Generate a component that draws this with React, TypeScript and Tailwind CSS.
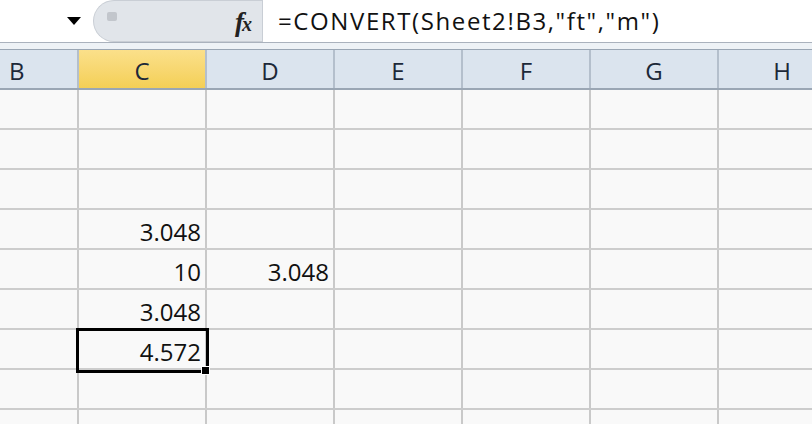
import React from 'react';

const cols = ['B', 'C', 'D', 'E', 'F', 'G', 'H'];
const widths = ['w-[79px]', 'w-[128px]', 'w-[128px]', 'w-[128px]', 'w-[128px]', 'w-[128px]', 'w-[128px]'];

// cell values by row index (0-based) and column letter
const values: Record<number, Record<string, string>> = {
  3: { C: '3.048' },
  4: { C: '10', D: '3.048' },
  5: { C: '3.048' },
  6: { C: '4.572' },
};

export default function App() {
  const rows = Array.from({ length: 9 }, (_, i) => i);

  return (
    <div className="w-[812px] h-[424px] overflow-hidden bg-[#f9f9f9] font-['Open_Sans',sans-serif] relative">
      {/* formula bar */}
      <div className="flex h-[43px] bg-white border-b border-[#aab2bd]">
        <div className="w-[93px] shrink-0 flex items-center justify-end pr-[12px]">
          <div className="w-0 h-0 border-l-[7px] border-r-[7px] border-t-[8px] border-l-transparent border-r-transparent border-t-black" />
        </div>
        <div className="w-[169px] shrink-0 h-[42px] bg-[#e1e5ea] rounded-l-[22px] border border-r-0 border-[#c9ced5] flex items-center justify-between pl-[13px] pr-[12px]">
          <div className="w-[10px] h-[9px] rounded-[2px] bg-[#c2c6cc] -mt-[10px]" />
          <span className="font-['Liberation_Serif',serif] italic font-bold text-[27px] leading-none text-[#222] tracking-[-2px] pt-[2px]">
            f<span className="text-[20px]">x</span>
          </span>
        </div>
        <div className="flex-1 border-l border-[#c9ced5] flex items-center pl-[15px] text-[24px] tracking-[1.6px] text-[#111] whitespace-nowrap">
          =CONVERT(Sheet2!B3,"ft","m")
        </div>
      </div>
      <div className="h-[6px] bg-[#eef2f6]" />

      {/* column headers */}
      <div className="flex h-[41px] border-t border-[#9aa6b4] border-b-2 border-b-[#9aa6b4]">
        {cols.map((c, i) => (
          <div
            key={c}
            className={`${widths[i]} shrink-0 flex items-center justify-center pt-[3px] border-r-2 border-[#b4bfcc] text-[24px] text-[#1c2838] ${
              c === 'C' ? 'bg-gradient-to-b from-[#fbe08a] to-[#f4cf55]' : 'bg-[#dbe4ee]'
            } ${c === 'B' ? 'justify-start pl-[9px]' : ''}`}
          >
            {c}
          </div>
        ))}
      </div>

      {/* grid */}
      <div className="flex flex-col">
        {rows.map((r) => (
          <div key={r} className="flex h-[40px] border-b-2 border-[#cdcdcd]">
            {cols.map((c, i) => (
              <div
                key={c}
                className={`${widths[i]} shrink-0 border-r-2 border-[#c9c9c9] flex items-center justify-end pr-[4px] pt-[6px] text-[24px] text-[#111]`}
              >
                {values[r]?.[c] ?? ''}
              </div>
            ))}
          </div>
        ))}
      </div>

      {/* active cell */}
      <div className="absolute left-[76px] top-[328px] w-[133px] h-[45px] border-[3px] border-black" />
      <div className="absolute left-[201px] top-[366px] w-[9px] h-[9px] bg-black border border-white" />
    </div>
  );
}
